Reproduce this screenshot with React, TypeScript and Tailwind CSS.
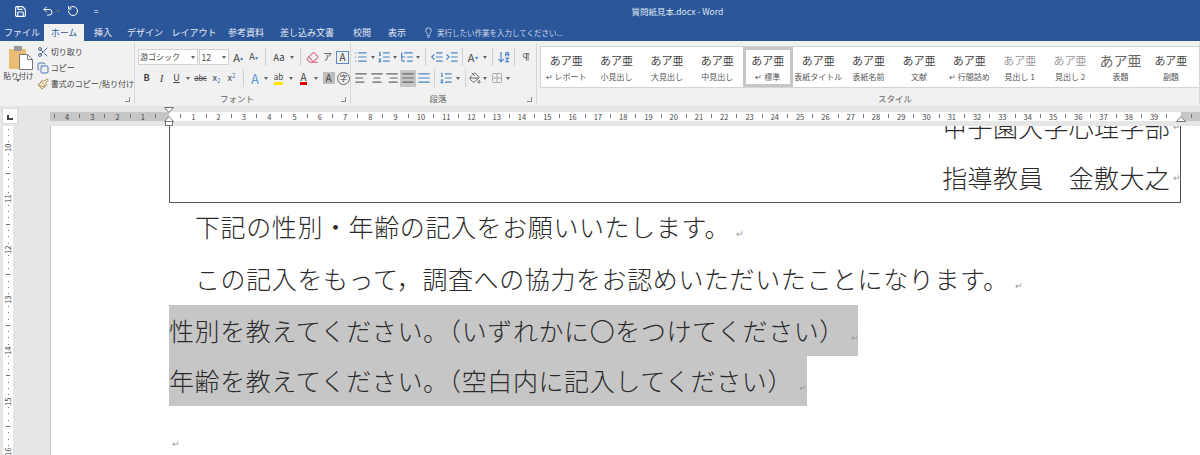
import type { ReactNode } from "react";
import {
  AlignCenter,
  AlignJustify,
  AlignLeft,
  AlignRight,
  ArrowDownAZ,
  Copy,
  Eraser,
  Grid2x2,
  IndentDecrease,
  IndentIncrease,
  Lightbulb,
  List,
  ListOrdered,
  ListTree,
  PaintBucket,
  Paintbrush,
  Pilcrow,
  RotateCw,
  Save,
  Scissors,
  Undo2,
} from "lucide-react";

const jp = "font-['Noto_Sans_CJK_JP','Noto_Sans',sans-serif]";

const tabs = [
  { label: "ファイル", w: "w-[44px]" },
  { label: "ホーム", w: "w-[40px]", active: true },
  { label: "挿入", w: "w-[38px]" },
  { label: "デザイン", w: "w-[46px]" },
  { label: "レイアウト", w: "w-[52px]" },
  { label: "参考資料", w: "w-[52px]" },
  { label: "差し込み文書", w: "w-[70px]" },
  { label: "校閲", w: "w-[40px]" },
  { label: "表示", w: "w-[30px]" },
];

const styles = [
  { name: "レポート", mark: true },
  { name: "小見出し" },
  { name: "大見出し" },
  { name: "中見出し" },
  { name: "標準", mark: true, selected: true },
  { name: "表紙タイトル" },
  { name: "表紙名前" },
  { name: "文献" },
  { name: "行間詰め", mark: true },
  { name: "見出し 1", sample: "text-[#9a9a9a]" },
  { name: "見出し 2", sample: "text-[#9a9a9a]" },
  { name: "表題", sample: "text-[14px] text-[#666]" },
  { name: "副題", sample: "text-[11px] text-[#444]" },
];

function Caret() {
  return <span className="mx-[2px] h-0 w-0 shrink-0 border-x-[2.5px] border-t-[3px] border-x-transparent border-t-[#666]" />;
}

function Sep({ className = "mx-[4px]" }: { className?: string }) {
  return <span className={`h-[18px] w-px shrink-0 bg-[#d0d0d0] ${className}`} />;
}

function Slot({ w, children, className = "" }: { w: string; children: ReactNode; className?: string }) {
  return <span className={`flex h-[17px] shrink-0 items-center justify-center ${w} ${className}`}>{children}</span>;
}

function Group({
  w,
  label,
  labelPad = "pr-[11px]",
  launcher = true,
  children,
}: {
  w: string;
  label?: string;
  labelPad?: string;
  launcher?: boolean;
  children: ReactNode;
}) {
  return (
    <div className={`relative flex h-[61px] shrink-0 flex-col border-r border-[#d8d8d8] ${w}`}>
      <div className="flex-1">{children}</div>
      <div className={`h-[11px] text-center text-[8.5px] leading-[11px] text-[#666] ${labelPad}`}>{label}</div>
      {launcher && <span className="absolute bottom-[2px] right-[4px] h-[5px] w-[5px] border-b border-r border-[#888]" />}
    </div>
  );
}

function PasteIcon() {
  return (
    <svg className="translate-x-[3px]" width="25" height="24" viewBox="0 0 25 24">
      <rect x="0" y="3" width="17" height="20" rx="1" fill="#e9bd73" />
      <rect x="5" y="0" width="8" height="5" fill="#9a9a9a" />
      <path d="M10.5 8.5h8l5 5v10h-13z" fill="#fff" stroke="#777" />
      <path d="M18.5 8.5v5h5" fill="none" stroke="#777" />
    </svg>
  );
}

function TopRuler() {
  const marks: ReactNode[] = [];
  [4, 3, 2, 1].forEach((n) => {
    marks.push(<RulerTick key={`lt${n}`} />);
    marks.push(<RulerNum key={`ln${n}`} n={n} />);
  });
  marks.push(<RulerTick key="lt0" />);
  marks.push(<span key="zero" className="w-[12.65px] shrink-0" />);
  for (let n = 1; n <= 39; n++) {
    marks.push(<RulerTick key={`t${n}`} />);
    marks.push(<RulerNum key={`n${n}`} n={n} />);
  }
  marks.push(<RulerTick key="t40" />);
  marks.push(<span key="z40" className="w-[12.65px] shrink-0" />);
  marks.push(<RulerTick key="t41" />);
  return (
    <div className="relative flex h-[20px] shrink-0 items-center bg-[#e6e6e6]">
      <div className="ml-[3px] flex h-[14px] w-[14px] items-center justify-center bg-white shadow-[0_0_0_1px_#dcdcdc]">
        <span className="h-[5px] w-[6px] translate-y-[1px] border-b-2 border-l-2 border-[#444]" />
      </div>
      <div className="ml-[33px] h-[9px] w-[1150px] overflow-hidden bg-[linear-gradient(to_right,#c6c6c6_0,#c6c6c6_119px,#fff_119px,#fff_1131px,#c6c6c6_1131px)]">
        <div className="-ml-[2px] flex h-[9px] items-center">{marks}</div>
      </div>
      <RulerMarker className="left-[164px] top-[1px] rotate-180" />
      <RulerMarker className="left-[164px] top-[10px]" />
      <span className="absolute left-[165px] top-[15px] h-[5px] w-[8px] border border-[#777] bg-white" />
      <RulerMarker className="left-[1176px] top-[10px]" />
    </div>
  );
}

function RulerTick() {
  return (
    <span className="flex w-[12.65px] shrink-0 justify-center">
      <span className="h-[4px] w-px bg-[#777]" />
    </span>
  );
}

function RulerNum({ n }: { n: number }) {
  return <span className="w-[12.65px] shrink-0 text-center text-[7.5px] leading-[9px] text-[#444]">{n}</span>;
}

function RulerMarker({ className }: { className: string }) {
  return (
    <svg className={`absolute ${className}`} width="10" height="6" viewBox="0 0 10 6">
      <path d="M5 .5 9.5 5.5H.5z" fill="#fff" stroke="#777" />
    </svg>
  );
}

function SideRuler() {
  const labels: Record<number, string> = { 3: "10", 11: "11", 19: "12", 27: "13", 35: "14", 43: "15", 51: "16" };
  const rows = Array.from({ length: 52 }, (_, i) => i);
  return (
    <div className="ml-[3px] flex w-[10px] shrink-0 flex-col overflow-hidden bg-white">
      {rows.map((i) => (
        <span key={i} className="flex h-[6.34px] shrink-0 items-center justify-center">
          {labels[i] ? (
            <span className="-rotate-90 text-[7.5px] leading-none text-[#444]">{labels[i]}</span>
          ) : i % 8 === 7 ? (
            <span className="h-px w-[4px] bg-[#777]" />
          ) : (
            <span className="h-px w-px bg-[#777]" />
          )}
        </span>
      ))}
    </div>
  );
}

function Mark({ className = "ml-[6px]" }: { className?: string }) {
  return <span className={`text-[9px] leading-none tracking-normal text-[#999] ${className}`}>↵</span>;
}

export default function App() {
  const ic = "h-[14px] w-[14px] text-[#666]";
  const ib = "h-[14px] w-[14px] text-[#4a86c5]";

  return (
    <div className={`flex h-[455px] w-[1200px] flex-col overflow-hidden bg-white ${jp}`}>
      {/* title bar and tabs */}
      <header className="h-[41px] shrink-0 bg-[#2b579a] text-white">
        <div className="flex h-[22px] items-center pl-[14px]">
          <Save className="h-[13px] w-[13px]" />
          <Undo2 className="ml-[15px] h-[12px] w-[12px]" />
          <Caret />
          <RotateCw className="ml-[5px] h-[12px] w-[12px] -scale-x-100" />
          <span className="ml-[15px] text-[8px] leading-none">=</span>
          <span className="ml-[533px] whitespace-nowrap text-[8.5px] text-[#dfe6f1]">質問紙見本.docx - Word</span>
        </div>
        <nav className="flex h-[19px] items-stretch pt-[2px]">
          {tabs.map((t) => (
            <span
              key={t.label}
              className={`flex items-center justify-center whitespace-nowrap text-[9px] leading-none ${t.w} ${
                t.active ? "bg-[#f1f1f1] text-[#2b579a]" : "text-[#e6ecf5]"
              }`}
            >
              {t.label}
            </span>
          ))}
          <span className="ml-[11px] flex items-center gap-[3px] whitespace-nowrap text-[7.5px] text-[#c9d5e8]">
            <Lightbulb className="h-[11px] w-[11px]" />
            実行したい作業を入力してください...
          </span>
        </nav>
      </header>

      {/* ribbon */}
      <section className="flex h-[65px] shrink-0 bg-[#f1f1f1] pt-[2px] text-[#444]">
        <Group w="w-[135px]" label="クリップボード">
          <div className="flex">
            <div className="flex w-[38px] flex-col items-center pt-[3px]">
              <PasteIcon />
              <span className="whitespace-nowrap text-[7.5px] leading-[11px]">貼り付け</span>
              <span className="mt-[1px]"><Caret /></span>
            </div>
            <div className="flex flex-col whitespace-nowrap pt-[1px] text-[8px] leading-[16px]">
              <span className="flex items-center gap-[2px]">
                <Scissors className="h-[12px] w-[12px] text-[#4a6a8a]" />
                切り取り
              </span>
              <span className="flex items-center gap-[2px]">
                <Copy className="h-[12px] w-[12px] text-[#4a7ab0]" />
                コピー
              </span>
              <span className="flex items-center gap-[2px]">
                <Paintbrush className="h-[12px] w-[12px] text-[#b08a40]" />
                書式のコピー/貼り付け
              </span>
            </div>
          </div>
        </Group>

        <Group w="w-[216px]" label="フォント">
          <div className="flex flex-col gap-[3px] pl-[3px] pt-[5px]">
            <div className="flex items-center">
              <span className="flex h-[16px] w-[63px] items-center justify-between border border-[#d4d4d4] bg-white pl-[1px] text-[8px]">
                游ゴシック
                <Caret />
              </span>
              <span className="ml-px flex h-[16px] w-[32px] items-center justify-between border border-[#d4d4d4] bg-white pl-[2px] text-[8.5px]">
                12
                <Caret />
              </span>
              <Slot w="w-[16px] ml-[1px]"><span className="text-[11px]">A</span><span className="text-[6px] text-[#3f7fbf]">▴</span></Slot>
              <Slot w="w-[15px]"><span className="text-[9px]">A</span><span className="text-[6px] text-[#3f7fbf]">▾</span></Slot>
              <Sep />
              <Slot w="w-[18px]"><span className="text-[9.5px]">Aa</span></Slot>
              <Caret />
              <Sep />
              <Slot w="w-[15px]"><Eraser className="h-[13px] w-[13px] text-[#e0708a]" /></Slot>
              <Slot w="w-[15px]"><span className="text-[9px]">ア</span></Slot>
              <Slot w="w-[15px]"><span className="flex h-[13px] w-[13px] items-center justify-center border border-[#5a8ac0] text-[10px] leading-none">A</span></Slot>
            </div>
            <div className="flex items-center pl-[1px]">
              <Slot w="w-[15px]"><b className="text-[9px]">B</b></Slot>
              <Slot w="w-[15px]"><i className="font-['Liberation_Serif',serif] text-[11px]">I</i></Slot>
              <Slot w="w-[15px]"><span className="text-[9px] underline">U</span></Slot>
              <Caret />
              <Slot w="w-[17px]"><span className="text-[7.5px] line-through">abc</span></Slot>
              <Slot w="w-[15px]"><span className="text-[9px]">x<sub className="text-[6px] text-[#3f7fbf]">2</sub></span></Slot>
              <Slot w="w-[15px]"><span className="text-[9px]">x<sup className="text-[6px] text-[#3f7fbf]">2</sup></span></Slot>
              <Sep />
              <Slot w="w-[14px]"><span className="text-[13px] leading-none text-[#5a9ad8]">A</span></Slot>
              <Caret />
              <Slot w="w-[17px]"><span className="border-b-[3px] border-[#ffe600] text-[8px] leading-[10px]">ab</span></Slot>
              <Caret />
              <Slot w="w-[17px]"><span className="border-b-[3px] border-[#e00000] text-[10px] leading-[10px]">A</span></Slot>
              <Caret />
              <Slot w="w-[13px]" className="ml-[2px]"><span className="flex h-[12px] w-[12px] items-center justify-center bg-[#bdbdbd] text-[10px] leading-none">A</span></Slot>
              <Slot w="w-[17px]"><span className="flex h-[13px] w-[13px] items-center justify-center rounded-full border border-[#666] text-[7.5px] leading-none">字</span></Slot>
            </div>
          </div>
        </Group>

        <Group w="w-[186px]" label="段落">
          <div className="flex flex-col gap-[3px] pl-[2px] pt-[5px]">
            <div className="flex items-center">
              <Slot w="w-[16px]"><List className={ib} /></Slot>
              <Caret />
              <Slot w="w-[14px]"><ListOrdered className={ib} /></Slot>
              <Caret />
              <Slot w="w-[15px]"><ListTree className={ib} /></Slot>
              <Caret />
              <Sep className="mx-[3px]" />
              <Slot w="w-[15px]"><IndentDecrease className={ib} /></Slot>
              <Slot w="w-[15px]"><IndentIncrease className={ib} /></Slot>
              <Sep className="mx-[3px]" />
              <Slot w="w-[15px]"><span className="text-[11px] leading-none">A</span><span className="text-[6px] text-[#3f7fbf]">✦</span></Slot>
              <Caret />
              <Sep className="mx-[3px]" />
              <Slot w="w-[15px]"><ArrowDownAZ className={ib} /></Slot>
              <Sep className="mx-[3px]" />
              <Slot w="w-[15px]"><Pilcrow className="h-[10px] w-[10px] text-[#555]" /></Slot>
            </div>
            <div className="flex items-center">
              <Slot w="w-[16px]"><AlignLeft className={ic} /></Slot>
              <Slot w="w-[15px]"><AlignCenter className={ic} /></Slot>
              <Slot w="w-[16px]"><AlignRight className={ic} /></Slot>
              <Slot w="w-[16px]" className="bg-[#c6c6c6]"><AlignJustify className={ic} /></Slot>
              <Slot w="w-[15px]"><AlignJustify className={ib} /></Slot>
              <Sep className="mx-[3px]" />
              <Slot w="w-[16px]"><ListOrdered className={ib} /></Slot>
              <Caret />
              <Sep className="mx-[3px]" />
              <Slot w="w-[12px]"><PaintBucket className={ic} /></Slot>
              <Caret />
              <Slot w="w-[14px]" className="ml-[1px]"><Grid2x2 className="h-[12px] w-[12px] text-[#aaa]" /></Slot>
              <Caret />
            </div>
          </div>
        </Group>

        <Group w="flex-1" label="スタイル" labelPad="pl-[54px]" launcher={false}>
          <div className="ml-[3px] mt-[3px] flex h-[42px] overflow-hidden border-y border-l border-[#d4d4d4] bg-white">
            {styles.map((s) => (
              <div
                key={s.name}
                className={`flex w-[50.4px] shrink-0 flex-col items-center justify-center gap-[5px] ${
                  s.selected ? "border-[3px] border-[#c6c6c6]" : ""
                }`}
              >
                <span className={`text-[11px] leading-[14px] ${s.sample ?? "text-[#444]"}`}>あア亜</span>
                <span className="whitespace-nowrap text-[8px] leading-[10px] text-[#555]">
                  {s.mark && "↵ "}
                  {s.name}
                </span>
              </div>
            ))}
          </div>
        </Group>
      </section>

      <TopRuler />

      {/* document */}
      <main className="flex min-h-0 flex-1 bg-[#e6e6e6]">
        <SideRuler />
        <div className="ml-[37px] flex-1 overflow-hidden border-l border-[#c6c6c6] bg-white pl-[118px] text-[25px] font-light tracking-[0.6px] text-[#2a2a2a]">
          <div className="-mt-[26px] w-[1012px] border border-[#555] tracking-[0.3px]">
            <p className="flex h-[51px] items-center justify-end leading-[49px]">甲子園大学心理学部<Mark className="-mr-[1px] ml-[3px]" /></p>
            <p className="flex h-[50px] items-center justify-end leading-[46px]">指導教員　金敷大之<Mark className="-mr-[1px] ml-[3px]" /></p>
          </div>
          <p className="h-[51px] whitespace-nowrap pl-[26px] leading-[47px]">下記の性別・年齢の記入をお願いいたします。<Mark /></p>
          <p className="h-[51px] whitespace-nowrap pl-[26px] leading-[49px]">この記入をもって，調査への協力をお認めいただいたことになります。<Mark /></p>
          <p className="h-[51px] w-[689px] whitespace-nowrap bg-[#c6c6c6] leading-[51px]">性別を教えてください。（いずれかに〇をつけてください）<Mark /></p>
          <p className="h-[50px] w-[638px] whitespace-nowrap bg-[#c6c6c6] leading-[48px]">年齢を教えてください。（空白内に記入してください）<Mark /></p>
          <p className="pl-[3px] leading-[60px]"><Mark className="ml-0" /></p>
        </div>
      </main>
    </div>
  );
}
